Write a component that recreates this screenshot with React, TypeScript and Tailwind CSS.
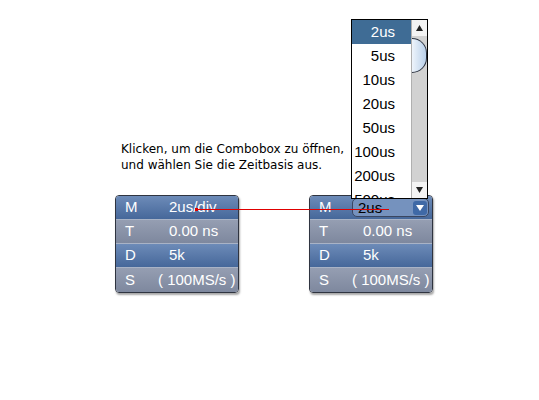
const rows = [
  { key: "M", value: "2us/div", tone: "blue", indent: "pl-[11px]" },
  { key: "T", value: "0.00 ns", tone: "gray", indent: "pl-[11px]" },
  { key: "D", value: "5k", tone: "blue", indent: "pl-[11px]" },
  { key: "S", value: "( 100MS/s )", tone: "gray", indent: "pl-0" },
];

const times = ["2us", "5us", "10us", "20us", "50us", "100us", "200us", "500us"];

function Row({ label, tone, last, children }: { label: string; tone: string; last?: boolean; children: React.ReactNode }) {
  return (
    <div
      className={
        "flex items-center h-[24px] text-white text-[15px] whitespace-nowrap " +
        (tone === "blue"
          ? "bg-gradient-to-b from-[#6d8bb8] to-[#46689a]"
          : "bg-gradient-to-b from-[#959eb2] to-[#7e889e]") +
        (last ? "" : " border-b border-[#a9b3c6]")
      }
    >
      <span className="w-[42px] shrink-0 pl-[9px]">{label}</span>
      {children}
    </div>
  );
}

function Panel({ combo }: { combo?: boolean }) {
  return (
    <div className="w-[124px] rounded-[4px] border border-[#2f3440] overflow-hidden shadow-[1px_2px_2px_rgba(0,0,0,0.35)]">
      {rows.map((r, i) => (
        <Row key={r.key} label={r.key} tone={r.tone} last={i === rows.length - 1}>
          {combo && r.key === "M" ? (
            <div className="flex items-center w-[77px] h-[19px] rounded-[5px] border border-[#3a4660] bg-[#7592be]">
              <span className="flex-1 pl-[5px] text-[15px] text-black leading-none">2us</span>
              <span className="w-[14px] h-[14px] mr-[1px] rounded-[3px] bg-[#3f69a6] flex items-center justify-center">
                <svg width="8" height="6" viewBox="0 0 8 6">
                  <path d="M0 0 H8 L4 6 Z" fill="#fff" />
                </svg>
              </span>
            </div>
          ) : (
            <span className={r.indent}>{r.value}</span>
          )}
        </Row>
      ))}
    </div>
  );
}

export default function App() {
  return (
    <div
      className="relative w-[539px] h-[400px] bg-white pt-[141px] pl-[115px]"
      style={{ fontFamily: "'Liberation Sans', Arial, sans-serif" }}
    >
      <div className="ml-[6px] text-[12px] leading-[16px] text-black" style={{ fontFamily: "'DejaVu Sans', sans-serif" }}>
        <div>Klicken, um die Combobox zu öffnen,</div>
        <div>und wählen Sie die Zeitbasis aus.</div>
      </div>

      <div className="flex gap-[70px] mt-[22px]">
        <Panel />
        <Panel combo />
      </div>

      {/* verbindungslinie */}
      <div className="absolute left-[195px] top-[208px] w-[3px] h-[3px] bg-[#e00000]" />
      <div className="absolute left-[196px] top-[209px] w-[193px] h-[1px] bg-[#e00000]" />

      {/* aufgeklappte liste */}
      <div className="absolute left-[351px] top-[19px] w-[77px] h-[180px] border border-black bg-white flex overflow-hidden">
        <div className="flex-1">
          {times.map((t, i) => (
            <div
              key={t}
              className={
                "h-[24px] flex items-center justify-end pr-[16px] text-[15px] " +
                (i === 0 ? "bg-[#3f6c95] text-white" : "text-black")
              }
            >
              {t}
            </div>
          ))}
        </div>
        <div className="w-[16px] bg-[#d2d2d2] border-l border-[#b0b0b0] flex flex-col">
          <div className="h-[16px] bg-[#f3f3f3] flex items-center justify-center">
            <svg width="7" height="6" viewBox="0 0 7 6">
              <path d="M3.5 0 L7 6 H0 Z" fill="#222" />
            </svg>
          </div>
          <div className="mt-[2px] h-[35px] w-[15px] rounded-r-full border border-l-0 border-[#2c3340] bg-gradient-to-r from-[#eef4fb] to-[#b9d0ea]" />
          <div className="flex-1" />
          <div className="h-[16px] bg-[#f3f3f3] flex items-center justify-center">
            <svg width="7" height="6" viewBox="0 0 7 6">
              <path d="M0 0 H7 L3.5 6 Z" fill="#222" />
            </svg>
          </div>
        </div>
      </div>
    </div>
  );
}
